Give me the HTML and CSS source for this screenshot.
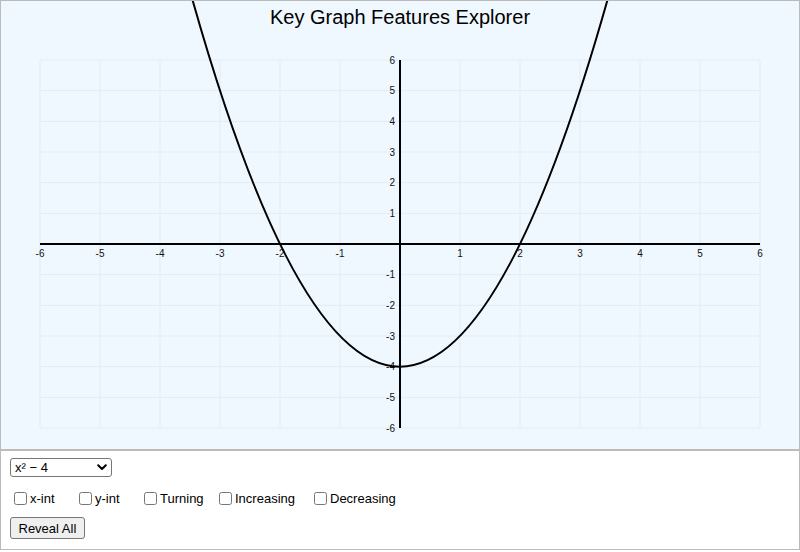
FILE: index.html
```html
<!DOCTYPE html>
<html>
<head>
<meta charset="utf-8">
<link rel="stylesheet" href="styles.css">
</head>
<body>
<div class="app">
  <svg class="graph" width="798" height="448" viewBox="1 1 798 448" xmlns="http://www.w3.org/2000/svg">
    <rect x="1" y="1" width="798" height="448" fill="#f0f8ff"/>
    <g class="grid" stroke="#e3eaf2" stroke-width="1">
      <line x1="40" y1="60" x2="40" y2="428"/>
      <line x1="100" y1="60" x2="100" y2="428"/>
      <line x1="160" y1="60" x2="160" y2="428"/>
      <line x1="220" y1="60" x2="220" y2="428"/>
      <line x1="280" y1="60" x2="280" y2="428"/>
      <line x1="340" y1="60" x2="340" y2="428"/>
      <line x1="400" y1="60" x2="400" y2="428"/>
      <line x1="460" y1="60" x2="460" y2="428"/>
      <line x1="520" y1="60" x2="520" y2="428"/>
      <line x1="580" y1="60" x2="580" y2="428"/>
      <line x1="640" y1="60" x2="640" y2="428"/>
      <line x1="700" y1="60" x2="700" y2="428"/>
      <line x1="760" y1="60" x2="760" y2="428"/>
      <line x1="40" y1="60" x2="760" y2="60"/>
      <line x1="40" y1="90.67" x2="760" y2="90.67"/>
      <line x1="40" y1="121.33" x2="760" y2="121.33"/>
      <line x1="40" y1="152" x2="760" y2="152"/>
      <line x1="40" y1="182.67" x2="760" y2="182.67"/>
      <line x1="40" y1="213.33" x2="760" y2="213.33"/>
      <line x1="40" y1="244" x2="760" y2="244"/>
      <line x1="40" y1="274.67" x2="760" y2="274.67"/>
      <line x1="40" y1="305.33" x2="760" y2="305.33"/>
      <line x1="40" y1="336" x2="760" y2="336"/>
      <line x1="40" y1="366.67" x2="760" y2="366.67"/>
      <line x1="40" y1="397.33" x2="760" y2="397.33"/>
      <line x1="40" y1="428" x2="760" y2="428"/>
    </g>
    <g stroke="#000" stroke-width="2">
      <line x1="40" y1="244" x2="760" y2="244"/>
      <line x1="400" y1="60" x2="400" y2="428"/>
    </g>
    <g class="xlabels" text-anchor="middle">
      <text x="40" y="257">-6</text>
      <text x="100" y="257">-5</text>
      <text x="160" y="257">-4</text>
      <text x="220" y="257">-3</text>
      <text x="280" y="257">-2</text>
      <text x="340" y="257">-1</text>
      <text x="460" y="257">1</text>
      <text x="520" y="257">2</text>
      <text x="580" y="257">3</text>
      <text x="640" y="257">4</text>
      <text x="700" y="257">5</text>
      <text x="760" y="257">6</text>
    </g>
    <g class="ylabels" text-anchor="end">
      <text x="395" y="63.5">6</text>
      <text x="395" y="94.2">5</text>
      <text x="395" y="124.8">4</text>
      <text x="395" y="155.5">3</text>
      <text x="395" y="186.2">2</text>
      <text x="395" y="216.8">1</text>
      <text x="395" y="278.2">-1</text>
      <text x="395" y="308.8">-2</text>
      <text x="395" y="339.5">-3</text>
      <text x="395" y="370.2">-4</text>
      <text x="395" y="400.8">-5</text>
      <text x="395" y="431.5">-6</text>
    </g>
    <path d="M184,-30.77 Q400,764.1 616,-30.77" fill="none" stroke="#000" stroke-width="2"/>
    <text class="title" x="400" y="24" text-anchor="middle">Key Graph Features Explorer</text>
  </svg>
  <div class="controls">
    <div class="select-wrap">
      <select class="fn-select">
        <option>x² − 4</option>
      </select>
      <svg class="chevron" width="10" height="7" viewBox="0 0 10 7" xmlns="http://www.w3.org/2000/svg"><polyline points="1.2,1.2 5,5 8.8,1.2" fill="none" stroke="#000" stroke-width="2" stroke-linecap="round" stroke-linejoin="round"/></svg>
    </div>
    <div class="features">
      <label class="feat"><input type="checkbox">x-int</label>
      <label class="feat"><input type="checkbox">y-int</label>
      <label class="feat"><input type="checkbox">Turning</label>
      <label class="feat"><input type="checkbox">Increasing</label>
      <label class="feat"><input type="checkbox">Decreasing</label>
    </div>
    <button class="reveal">Reveal All</button>
  </div>
</div>
</body>
</html>
```
FILE: styles.css
```css
html, body {
  margin: 0;
  padding: 0;
  background: #fff;
}
body {
  font-family: "Liberation Sans", Arial, Helvetica, sans-serif;
}
.app {
  width: 800px;
  height: 550px;
  box-sizing: border-box;
  border: 1px solid #bbb;
  display: flex;
  flex-direction: column;
}
.graph {
  display: block;
  flex: none;
}
.graph text {
  font-family: "Liberation Sans", Arial, Helvetica, sans-serif;
}
.xlabels text, .ylabels text {
  font-size: 10px;
  fill: #111;
}
.title {
  font-size: 20px;
  fill: #000;
}
.controls {
  border-top: 2px solid #bbb;
  padding: 7px 9px 9px;
  display: flex;
  flex-direction: column;
  align-items: flex-start;
  background: #fff;
}
.select-wrap {
  position: relative;
  width: 102px;
  height: 19px;
}
.fn-select {
  appearance: none;
  -webkit-appearance: none;
  width: 102px;
  height: 19px;
  box-sizing: border-box;
  border: 1px solid #767676;
  border-radius: 3px;
  background: #fff;
  font-family: "Liberation Sans", Arial, Helvetica, sans-serif;
  font-size: 13px;
  color: #000;
  padding: 0 0 0 4px;
  margin: 0;
  line-height: 17px;
}
.chevron {
  position: absolute;
  right: 5px;
  top: 6px;
  pointer-events: none;
}
.features {
  display: grid;
  grid-template-columns: 65px 65px 75px 95px auto;
  align-items: center;
  height: 18px;
  margin: 12px 0 10px;
  font-size: 13px;
  color: #000;
}
.feat {
  display: flex;
  align-items: center;
  white-space: nowrap;
}
.feat input {
  width: 13px;
  height: 13px;
  margin: 3px 3px 3px 4px;
}
.reveal {
  height: 22px;
  box-sizing: border-box;
  padding: 1px 7.5px;
  margin: 0;
  border: 1px solid #767676;
  border-radius: 3px;
  background: #efefef;
  font-family: "Liberation Sans", Arial, Helvetica, sans-serif;
  font-size: 13px;
  color: #000;
}
```
